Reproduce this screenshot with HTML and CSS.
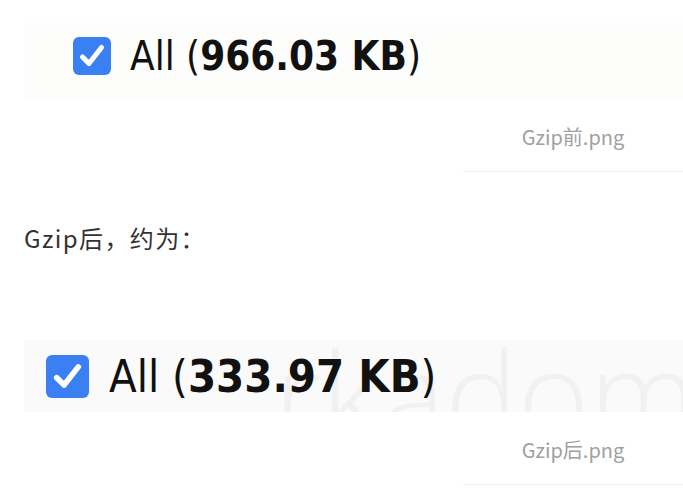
FILE: index.html
```html
<!DOCTYPE html>
<html lang="zh-CN">
<head>
    <meta charset="UTF-8">
    <meta name="viewport" content="width=device-width, initial-scale=1.0">
    <title>Gzip</title>
    <link rel="stylesheet" href="styles.css">
</head>
<body>
    <div class="post">
        <figure class="figure">
            <div class="shot shot-before">
                <span class="check">
                    <svg viewBox="0 0 38 38" width="38" height="38"><path d="M9.5 20l6.5 6.5L28.5 10.5" fill="none" stroke="#fff" stroke-width="5" stroke-linecap="round" stroke-linejoin="round"/></svg>
                </span>
                <span class="label">All (<b>966.03 KB</b>)</span>
            </div>
            <figcaption class="caption">Gzip前.png</figcaption>
        </figure>

        <p class="text">Gzip后，约为：</p>

        <figure class="figure">
            <div class="shot shot-after">
                <span class="mark">rkadom.</span>
                <span class="check check-big">
                    <svg viewBox="0 0 38 38" width="43" height="43"><path d="M9.5 20l6.5 6.5L28.5 10.5" fill="none" stroke="#fff" stroke-width="5" stroke-linecap="round" stroke-linejoin="round"/></svg>
                </span>
                <span class="label label-big">All (<b>333.97 KB</b>)</span>
            </div>
            <figcaption class="caption caption-after">Gzip后.png</figcaption>
        </figure>
    </div>
</body>
</html>
```

FILE: styles.css
```css
body {
  margin: 0;
  background: #fff;
  overflow: hidden;
  font-family: "Noto Sans CJK SC", "Noto Sans", sans-serif;
}
.post {
  padding: 23px 0 0 24px;
}
.figure {
  margin: 0;
}
.shot {
  position: relative;
  overflow: hidden;
  display: flex;
  align-items: center;
  box-sizing: border-box;
}
.shot-before {
  height: 76px;
  padding: 0 0 10px 49px;
  background: #fdfdfb;
}
.shot-after {
  height: 72px;
  padding: 0 0 0 22px;
  background: #fafafa;
}
.mark {
  position: absolute;
  left: 250px;
  top: -30px;
  font-family: "Open Sans", sans-serif;
  font-weight: 300;
  font-size: 122px;
  color: #f1f1f1;
  white-space: nowrap;
}
.check {
  position: relative;
  width: 38px;
  height: 38px;
  border-radius: 6px;
  background: #3a80f3;
  display: flex;
  align-items: center;
  justify-content: center;
  flex-shrink: 0;
}
.check-big {
  width: 43px;
  height: 43px;
  border-radius: 6px;
}
.label {
  position: relative;
  margin-left: 19px;
  font-family: "DejaVu Sans", sans-serif;
  font-size: 40px;
  color: #111;
  white-space: nowrap;
  transform: scaleX(0.9);
  transform-origin: left center;
}
.label-big {
  margin-left: 20px;
  font-size: 45px;
}
.caption {
  margin-left: 439px;
  padding: 25px 0 22px;
  line-height: 25px;
  font-size: 20px;
  color: #a0a0a0;
  text-align: center;
  border-bottom: 1px solid #eee;
}
.caption-after {
  padding: 25px 0 22px;
}
.text {
  margin: 50px 0 86px;
  font-size: 24px;
  line-height: 32px;
  letter-spacing: 1.4px;
  color: #333;
}
```
